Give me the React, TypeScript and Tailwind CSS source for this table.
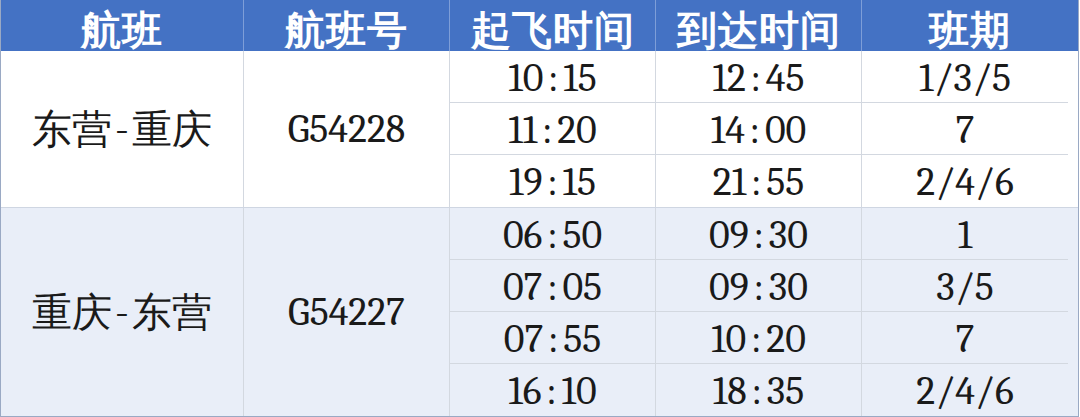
import React from "react";

function Mono({ text }: { text: string }) {
  // SimSun-like: every ASCII glyph takes half an em
  return (
    <span className="inline-flex">
      {text.split("").map((c, i) =>
        c === ":" || c === "/" ? (
          <span key={i} className="inline-block w-[0.5em] text-center">
            {c}
          </span>
        ) : (
          <span key={i}>{c}</span>
        )
      )}
    </span>
  );
}

type Row = { dep: string; arr: string; days: string };

const groups: { route: [string, string]; no: string; rows: Row[]; bg: string }[] = [
  {
    route: ["东营", "重庆"],
    no: "G54228",
    bg: "bg-white",
    rows: [
      { dep: "10:15", arr: "12:45", days: "1/3/5" },
      { dep: "11:20", arr: "14:00", days: "7" },
      { dep: "19:15", arr: "21:55", days: "2/4/6" },
    ],
  },
  {
    route: ["重庆", "东营"],
    no: "G54227",
    bg: "bg-[#e9eef8]",
    rows: [
      { dep: "06:50", arr: "09:30", days: "1" },
      { dep: "07:05", arr: "09:30", days: "3/5" },
      { dep: "07:55", arr: "10:20", days: "7" },
      { dep: "16:10", arr: "18:35", days: "2/4/6" },
    ],
  },
];

const headers = ["航班", "航班号", "起飞时间", "到达时间", "班期"];

export default function App() {
  return (
    <div className="w-[1080px] h-[417px] bg-white overflow-hidden">
      <div className="w-[1079px] border-l border-r border-b border-[#9aa9c4]">
        <div className="grid grid-cols-[243px_206px_206px_206px_216px] h-[51px] bg-[#4472c4]">
          {headers.map((h, i) => (
            <div
              key={h}
              className={`flex items-center justify-center pt-[6px] text-white font-bold text-[40px] leading-none tracking-[1px] ${
                i < 4 ? "border-r border-[#7e9ed8]" : ""
              }`}
            >
              {h}
            </div>
          ))}
        </div>
        {groups.map((g, gi) => (
          <div
            key={g.no}
            className={`grid grid-cols-[243px_206px_618px] ${g.bg} ${gi === 0 ? "border-b border-[#cfd6e2]" : ""}`}
          >
            <div className="flex items-center justify-center border-r border-[#d3d8e0] text-[40px] leading-none text-[#1a1a1a] font-light pb-[2px]">
              <span>{g.route[0]}</span>
              <span className="inline-block w-[20px] text-center">-</span>
              <span>{g.route[1]}</span>
            </div>
            <div className="flex items-center justify-center border-r border-[#d3d8e0] text-[40px] leading-none text-[#1a1a1a] font-serif">
              <span>{g.no}</span>
            </div>
            <div className="flex flex-col">
              {g.rows.map((r, ri) => (
                <div
                  key={ri}
                  className={`grid grid-cols-[206px_206px_206px] h-[52px] ${
                    ri < g.rows.length - 1 ? "border-b border-[#d3d8e0]" : ""
                  } text-[40px] leading-none text-[#1a1a1a] font-serif`}
                >
                  <div className="flex items-center justify-center border-r border-[#d3d8e0] pt-[2px]">
                    <Mono text={r.dep} />
                  </div>
                  <div className="flex items-center justify-center border-r border-[#d3d8e0] pt-[2px]">
                    <Mono text={r.arr} />
                  </div>
                  <div className="flex items-center justify-center pt-[2px]">
                    <Mono text={r.days} />
                  </div>
                </div>
              ))}
            </div>
          </div>
        ))}
      </div>
    </div>
  );
}
